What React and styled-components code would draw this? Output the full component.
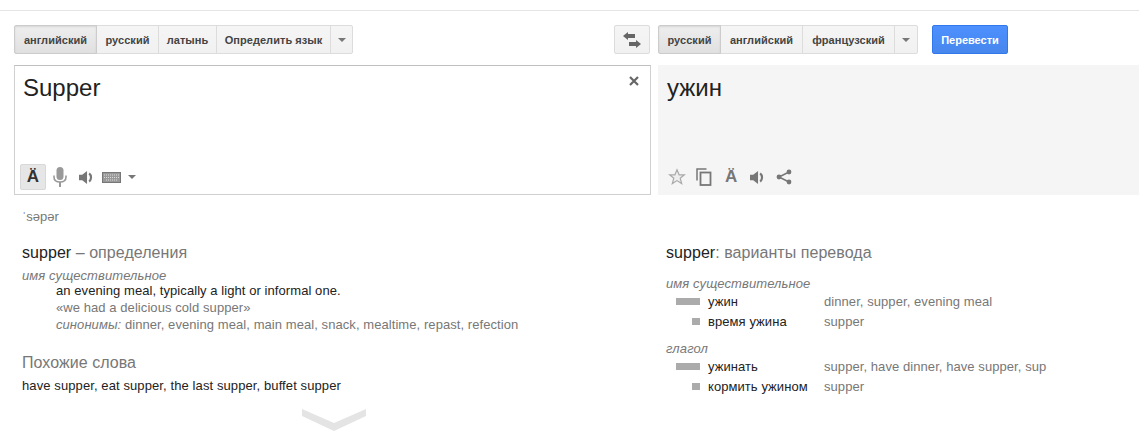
import React from 'react';
import styled, { createGlobalStyle } from 'styled-components';

const GlobalStyle = createGlobalStyle`
  html, body {
    margin: 0;
    padding: 0;
    background: #fff;
    overflow: hidden;
  }
  body {
    font-family: "Liberation Sans", Arial, sans-serif;
    color: #222;
  }
`;

const Speaker = () => (
  <svg width="15" height="15" viewBox="0 0 14 14">
    <path d="M0 4.500h3L7.500 1v12L3 9.500H0z" fill="#777" />
    <path d="M9.500 3.200c2.300 1.900 2.300 5.700 0 7.600" fill="none" stroke="#777" strokeWidth="2" />
  </svg>
);

const Mic = () => (
  <svg width="14" height="20" viewBox="0 0 14 20">
    <rect x="3.500" y="0" width="7" height="13" rx="3.500" fill="#999" />
    <path d="M1 8.500v1.500c0 3.300 2.700 5 6 5s6-1.700 6-5V8.500" fill="none" stroke="#999" strokeWidth="1.600" />
    <rect x="6" y="15" width="2" height="5" fill="#999" />
  </svg>
);

const Keyboard = () => (
  <svg width="19" height="11" viewBox="0 0 19 11">
    <rect x="0.500" y="0.500" width="18" height="10" fill="#999" stroke="#777" />
    <path d="M2 3h15M2 5.500h15M4 8h11" stroke="#ddd" strokeWidth="1" strokeDasharray="1 1" />
  </svg>
);

const Star = () => (
  <svg width="18" height="18" viewBox="0 0 18 18">
    <path
      d="M9 1.800l2.100 5h5.300l-4.200 3.400 1.500 5.400L9 12.600l-4.700 3 1.500-5.400L1.600 6.800h5.300z"
      fill="#eee"
      stroke="#aaa"
      strokeWidth="1.200"
    />
  </svg>
);

const Copy = () => (
  <svg width="16" height="18" viewBox="0 0 16 18">
    <path d="M1 12.500V1h9.500" fill="none" stroke="#777" strokeWidth="1.500" />
    <rect x="4.500" y="4.500" width="10" height="12.500" fill="none" stroke="#777" strokeWidth="1.800" />
  </svg>
);

const Share = () => (
  <svg width="16" height="16" viewBox="0 0 16 16">
    <path d="M13 3L3 8l10 5" fill="none" stroke="#777" strokeWidth="1.500" />
    <circle cx="13" cy="3" r="2.400" fill="#777" />
    <circle cx="3" cy="8" r="2.400" fill="#777" />
    <circle cx="13" cy="13" r="2.400" fill="#777" />
  </svg>
);

const Swap = () => (
  <svg width="18" height="16" viewBox="0 0 18 16">
    <path d="M0 4l5-4v2h7v4H5v2z" fill="#666" />
    <path d="M18 12l-5-4v2H6v4h7v2z" fill="#666" />
  </svg>
);

const Close = () => (
  <svg width="10" height="10" viewBox="0 0 10 10">
    <path d="M1 1l8 8M9 1l-8 8" stroke="#666" strokeWidth="2.200" />
  </svg>
);

const Page = styled.div`
  width: 1139px;
  height: 434px;
  padding-top: 10px;
  box-sizing: border-box;
  overflow: hidden;
`;

const TopLine = styled.div`
  height: 1px;
  background: #e5e5e5;
`;

const Toolbar = styled.div`
  display: flex;
  align-items: flex-start;
  height: 29px;
  margin-top: 14px;
  padding-left: 14px;
`;

const LangGroup = styled.div`
  display: flex;
  height: 29px;
  box-sizing: border-box;
  margin-left: ${(p) => p.$offset || 0}px;
`;

const LangButton = styled.div`
  display: flex;
  align-items: center;
  justify-content: center;
  box-sizing: border-box;
  width: ${(p) => p.$w}px;
  height: 29px;
  margin-left: -1px;
  border: 1px solid ${(p) => (p.$active ? '#ccc' : '#dcdcdc')};
  background: ${(p) =>
    p.$active ? 'linear-gradient(#eee, #e0e0e0)' : 'linear-gradient(#f5f5f5, #f1f1f1)'};
  box-shadow: ${(p) => (p.$active ? 'inset 0 1px 2px rgba(0,0,0,.1)' : 'none')};
  color: #444;
  font-size: 11px;
  font-weight: bold;
  letter-spacing: 0.05px;
  white-space: nowrap;
  z-index: ${(p) => (p.$active ? 1 : 0)};
  &:first-child {
    margin-left: 0;
    border-radius: 2px 0 0 2px;
  }
  &:last-child {
    border-radius: 0 2px 2px 0;
  }
`;

const Caret = styled.span`
  width: 0;
  height: 0;
  border-left: 4px solid transparent;
  border-right: 4px solid transparent;
  border-top: 4px solid #777;
`;

const SwapButton = styled.div`
  display: flex;
  align-items: center;
  justify-content: center;
  box-sizing: border-box;
  width: 36px;
  height: 29px;
  margin-left: 261px;
  border: 1px solid #dcdcdc;
  border-radius: 2px;
  background: linear-gradient(#f5f5f5, #f1f1f1);
`;

const TranslateButton = styled.div`
  display: flex;
  align-items: center;
  justify-content: center;
  box-sizing: border-box;
  width: 76px;
  height: 29px;
  margin-left: 14px;
  border: 1px solid #3079ed;
  border-radius: 2px;
  background: linear-gradient(#4d90fe, #4787ed);
  color: #fff;
  font-size: 11px;
  font-weight: bold;
`;

const Panels = styled.div`
  display: flex;
  margin-top: 11px;
  padding-left: 14px;
`;

const SourcePanel = styled.div`
  position: relative;
  display: flex;
  flex-direction: column;
  justify-content: space-between;
  box-sizing: border-box;
  width: 637px;
  height: 130px;
  padding: 8px 8px 4px 5px;
  border: 1px solid #d0d0d0;
  border-top-color: #c0c0c0;
`;

const ResultPanel = styled.div`
  display: flex;
  flex-direction: column;
  justify-content: space-between;
  box-sizing: border-box;
  width: 481px;
  height: 130px;
  margin-left: 7px;
  padding: 9px 9px 5px 9px;
  background: #f5f5f5;
`;

const BigText = styled.div`
  font-size: 24px;
  line-height: 28px;
  color: #222;
  padding-left: ${(p) => p.$indent}px;
`;

const ClearButton = styled.div`
  position: absolute;
  top: 10px;
  right: 11px;
  display: flex;
`;

const IconRow = styled.div`
  display: grid;
  grid-template-columns: ${(p) => p.$columns};
  align-items: center;
  justify-items: start;
  height: 26px;
  padding-left: ${(p) => p.$inset || 0}px;
`;

const KeyboardCell = styled.span`
  display: flex;
  align-items: center;
  gap: 7px;
`;

const ToggleA = styled.div`
  display: flex;
  align-items: center;
  justify-content: center;
  box-sizing: border-box;
  width: 26px;
  height: 26px;
  border: 1px solid #d8d8d8;
  border-radius: 2px;
  background: #e6e6e6;
  color: #333;
  font-size: 17px;
  font-weight: bold;
`;

const PlainA = styled.span`
  color: #777;
  font-size: 17px;
  font-weight: bold;
  line-height: 18px;
`;

const Phonetic = styled.div`
  margin: 14px 0 0 22px;
  height: 15px;
  font-size: 13px;
  line-height: 15px;
  color: #777;
`;

const Columns = styled.div`
  display: flex;
  margin-top: 19px;
`;

const LeftColumn = styled.div`
  box-sizing: border-box;
  width: 644px;
  padding-left: 22px;
`;

const RightColumn = styled.div`
  flex: 1;
  padding-left: 22px;
`;

const Heading = styled.div`
  font-size: 16px;
  line-height: 20px;
  letter-spacing: 0.05px;
  color: #777;
`;

const Term = styled.span`
  color: #222;
`;

const PartOfSpeech = styled.div`
  font-size: 13px;
  font-style: italic;
  line-height: 17px;
  letter-spacing: 0.1px;
  color: #777;
  margin: ${(p) => p.$margin};
`;

const Gloss = styled.div`
  padding-left: 34px;
  font-size: 13px;
  line-height: 17px;
  letter-spacing: 0.07px;
  color: ${(p) => p.$color || '#222'};
`;

const Synonyms = styled.em`
  color: #777;
`;

const SeeAlso = styled.div`
  margin-top: ${(p) => p.$top}px;
`;

const PhraseLine = styled.div`
  margin-top: 4px;
  font-size: 13px;
  line-height: 17px;
  letter-spacing: 0.1px;
  color: #222;
`;

const Chevron = styled.div`
  display: flex;
  margin: 15px 0 0 280px;
`;

const PosGroup = styled.div`
  margin-top: ${(p) => p.$top}px;
`;

const TransRow = styled.div`
  display: grid;
  grid-template-columns: 34px 108px 1fr;
  column-gap: 8px;
  align-items: center;
  height: 20px;
  font-size: 13px;
  letter-spacing: 0.07px;
  color: #222;
`;

const BarCell = styled.div`
  display: flex;
  justify-content: flex-end;
`;

const Bar = styled.div`
  width: ${(p) => p.$w}px;
  height: 7px;
  background: #ababab;
`;

const Variants = styled.div`
  color: #777;
`;

const TranslationRow = ({ width, word, variants }) => (
  <TransRow>
    <BarCell>
      <Bar $w={width} />
    </BarCell>
    <div>{word}</div>
    <Variants>{variants}</Variants>
  </TransRow>
);

const App = () => (
  <Page>
    <GlobalStyle />
    <TopLine />
    <Toolbar>
      <LangGroup>
        <LangButton $w={83} $active>английский</LangButton>
        <LangButton $w={63}>русский</LangButton>
        <LangButton $w={59}>латынь</LangButton>
        <LangButton $w={115}>Определить язык</LangButton>
        <LangButton $w={23}><Caret /></LangButton>
      </LangGroup>
      <SwapButton><Swap /></SwapButton>
      <LangGroup $offset={8}>
        <LangButton $w={63} $active>русский</LangButton>
        <LangButton $w={83}>английский</LangButton>
        <LangButton $w={93}>французский</LangButton>
        <LangButton $w={24}><Caret /></LangButton>
      </LangGroup>
      <TranslateButton>Перевести</TranslateButton>
    </Toolbar>
    <Panels>
      <SourcePanel>
        <BigText $indent={3}>Supper</BigText>
        <ClearButton><Close /></ClearButton>
        <IconRow $columns="33px 26px 23px auto">
          <ToggleA>Ä</ToggleA>
          <Mic />
          <Speaker />
          <KeyboardCell><Keyboard /><Caret /></KeyboardCell>
        </IconRow>
      </SourcePanel>
      <ResultPanel>
        <BigText $indent={0}>ужин</BigText>
        <IconRow $columns="28px 29px 25px 26px 16px" $inset={1}>
          <Star />
          <Copy />
          <PlainA>Ä</PlainA>
          <Speaker />
          <Share />
        </IconRow>
      </ResultPanel>
    </Panels>
    <Phonetic>ˈsəpər</Phonetic>
    <Columns>
      <LeftColumn>
        <Heading><Term>supper</Term> – определения</Heading>
        <PartOfSpeech $margin="4px 0 -2px">имя существительное</PartOfSpeech>
        <Gloss>an evening meal, typically a light or informal one.</Gloss>
        <Gloss $color="#777">«we had a delicious cold supper»</Gloss>
        <Gloss $color="#777">
          <Synonyms>синонимы:</Synonyms> dinner, evening meal, main meal, snack, mealtime, repast, refection
        </Gloss>
        <SeeAlso $top={20}>
          <Heading>Похожие слова</Heading>
          <PhraseLine>have supper, eat supper, the last supper, buffet supper</PhraseLine>
        </SeeAlso>
        <Chevron>
          <svg width="64" height="22" viewBox="0 0 64 22">
            <path d="M0 0l32 14L64 0v7L32 22 0 7z" fill="#e4e4e4" />
          </svg>
        </Chevron>
      </LeftColumn>
      <RightColumn>
        <Heading><Term>supper</Term>: варианты перевода</Heading>
        <PosGroup $top={12}>
          <PartOfSpeech $margin="0 0 -1px">имя существительное</PartOfSpeech>
          <TranslationRow width={24} word="ужин" variants="dinner, supper, evening meal" />
          <TranslationRow width={8} word="время ужина" variants="supper" />
        </PosGroup>
        <PosGroup $top={9}>
          <PartOfSpeech $margin="0 0 -1px">глагол</PartOfSpeech>
          <TranslationRow width={24} word="ужинать" variants="supper, have dinner, have supper, sup" />
          <TranslationRow width={8} word="кормить ужином" variants="supper" />
        </PosGroup>
      </RightColumn>
    </Columns>
  </Page>
);

export default App;
